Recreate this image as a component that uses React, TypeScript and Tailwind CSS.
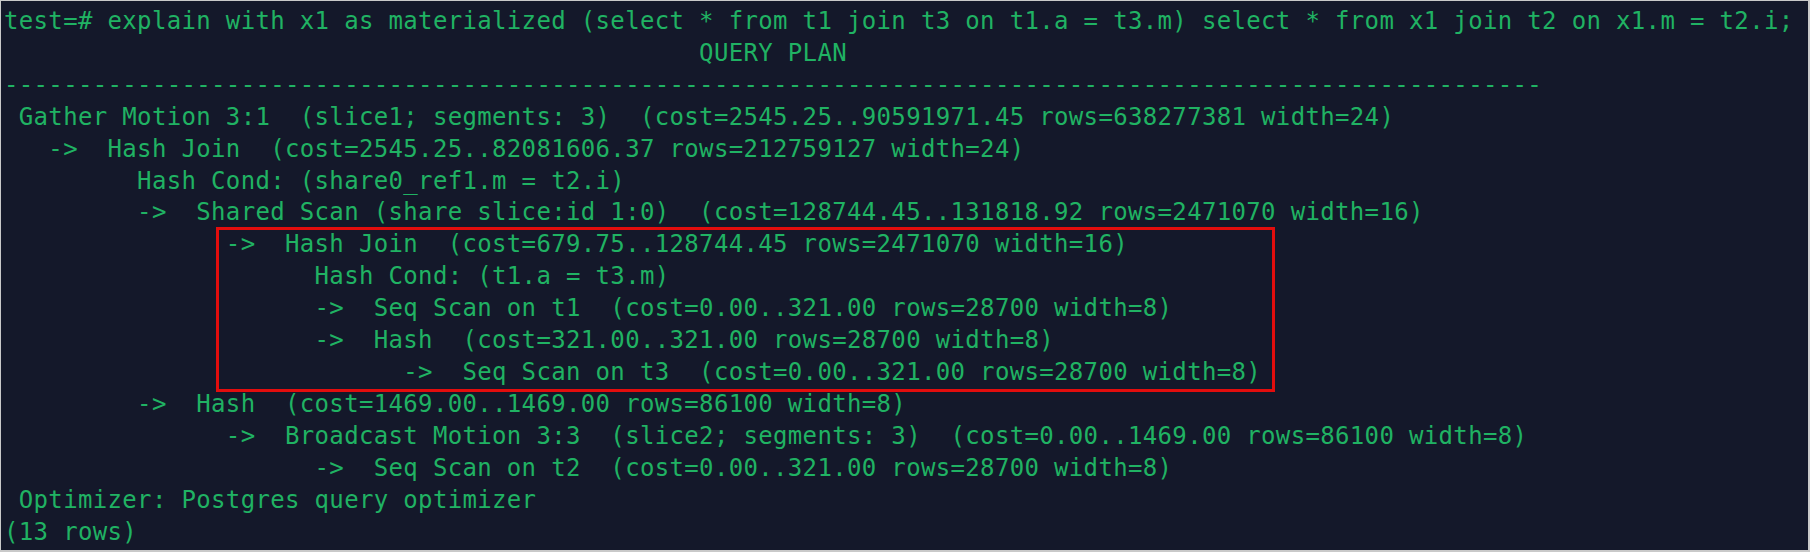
import React from "react";

const lines: string[] = [
  "test=# explain with x1 as materialized (select * from t1 join t3 on t1.a = t3.m) select * from x1 join t2 on x1.m = t2.i;",
  " ".repeat(47) + "QUERY PLAN",
  "-".repeat(104),
  " Gather Motion 3:1  (slice1; segments: 3)  (cost=2545.25..90591971.45 rows=638277381 width=24)",
  "   ->  Hash Join  (cost=2545.25..82081606.37 rows=212759127 width=24)",
  "         Hash Cond: (share0_ref1.m = t2.i)",
  "         ->  Shared Scan (share slice:id 1:0)  (cost=128744.45..131818.92 rows=2471070 width=16)",
  "               ->  Hash Join  (cost=679.75..128744.45 rows=2471070 width=16)",
  "                     Hash Cond: (t1.a = t3.m)",
  "                     ->  Seq Scan on t1  (cost=0.00..321.00 rows=28700 width=8)",
  "                     ->  Hash  (cost=321.00..321.00 rows=28700 width=8)",
  "                           ->  Seq Scan on t3  (cost=0.00..321.00 rows=28700 width=8)",
  "         ->  Hash  (cost=1469.00..1469.00 rows=86100 width=8)",
  "               ->  Broadcast Motion 3:3  (slice2; segments: 3)  (cost=0.00..1469.00 rows=86100 width=8)",
  "                     ->  Seq Scan on t2  (cost=0.00..321.00 rows=28700 width=8)",
  " Optimizer: Postgres query optimizer",
  "(13 rows)",
];

export default function App() {
  return (
    <div className="relative w-[1810px] h-[552px] overflow-hidden border-t border-l border-r-2 border-b-2 border-[#c9c9c9] bg-[#14182a]">
      <div className="flex flex-col pl-[3px] pt-[5px] font-['DejaVu_Sans_Mono',monospace] text-[24px] tracking-[0.34px] leading-[31.9px] text-[#20b263] whitespace-pre">
        {lines.map((l, i) => (
          <div key={i}>{l}</div>
        ))}
      </div>
      <div className="absolute left-[215px] top-[226px] w-[1059px] h-[165px] border-[3px] border-[#e30d0d]" />
    </div>
  );
}
